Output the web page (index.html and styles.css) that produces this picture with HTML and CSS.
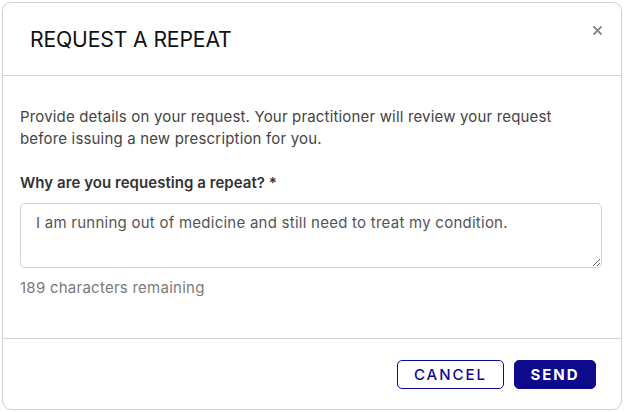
FILE: index.html
```html
<!DOCTYPE html>
<html>
<head>
<meta charset="utf-8">
<link rel="stylesheet" href="styles.css">
</head>
<body>
<div class="modal">
  <div class="modal-header">
    <h1 class="title">REQUEST A REPEAT</h1>
    <button class="close" aria-label="Close">
      <svg width="9" height="9" viewBox="0 0 9 9"><path d="M1 1L8 8M8 1L1 8" stroke="#8a8a8a" stroke-width="1.8" stroke-linecap="round"/></svg>
    </button>
  </div>
  <div class="modal-body">
    <p class="intro">Provide details on your request. Your practitioner will review your request before issuing a new prescription for you.</p>
    <label class="label">Why are you requesting a repeat? *</label>
    <textarea class="reason">I am running out of medicine and still need to treat my condition.</textarea>
    <div class="remaining">189 characters remaining</div>
  </div>
  <div class="modal-footer">
    <button class="btn btn-outline">CANCEL</button>
    <button class="btn btn-solid">SEND</button>
  </div>
</div>
</body>
</html>
```
FILE: styles.css
```css
html, body {
  margin: 0;
  padding: 0;
  background: #ffffff;
}
body {
  padding: 2px;
  font-family: Inter, "Liberation Sans", sans-serif;
}
.modal {
  width: 620px;
  height: 408px;
  border: 1px solid #cfcfcf;
  border-radius: 9px;
  box-sizing: border-box;
  display: flex;
  flex-direction: column;
  background: #fff;
}
.modal-header {
  height: 73px;
  border-bottom: 1px solid #d4d4d4;
  display: flex;
  align-items: flex-start;
  justify-content: space-between;
  box-sizing: border-box;
  padding: 0 19px 0 27px;
}
.title {
  margin: 23px 0 0 0;
  font-size: 21.2px;
  font-weight: 400;
  color: #111;
  letter-spacing: -0.15px;
  line-height: 26px;
}
.close {
  border: none;
  background: none;
  padding: 0;
  margin-top: 23px;
  width: 9px;
  height: 9px;
  display: flex;
}
.modal-body {
  padding: 30px 19px 0 17px;
  height: 263px;
  box-sizing: border-box;
  border-bottom: 1px solid #d4d4d4;
}
.intro {
  margin: 0;
  font-size: 15px;
  line-height: 22px;
  color: #444;
  letter-spacing: 0.17px;
}
.label {
  display: block;
  margin-top: 22px;
  font-size: 15px;
  font-weight: 600;
  color: #333;
  letter-spacing: 0.05px;
  line-height: 22px;
}
.reason {
  display: block;
  margin-top: 9px;
  width: 582px;
  height: 65px;
  box-sizing: border-box;
  border: 1px solid #d2d2d2;
  border-radius: 5px;
  padding: 9px 15px;
  font-family: Inter, "Liberation Sans", sans-serif;
  font-size: 15px;
  letter-spacing: 0.25px;
  line-height: 20px;
  color: #555;
  resize: vertical;
  outline: none;
}
.remaining {
  margin-top: 9px;
  font-size: 15px;
  letter-spacing: 0.25px;
  color: #7a7a7a;
  line-height: 22px;
}
.modal-footer {
  flex: 1;
  display: flex;
  justify-content: flex-end;
  align-items: flex-start;
  gap: 10px;
  padding: 21px 25px 0 0;
}
.btn {
  height: 29px;
  box-sizing: border-box;
  border-radius: 5px;
  font-family: Inter, "Liberation Sans", sans-serif;
  font-size: 15px;
  font-weight: 600;
  letter-spacing: 2px;
  cursor: pointer;
  padding: 0;
}
.btn-outline {
  width: 107px;
  border: 1px solid #0e0a8c;
  background: #fff;
  color: #0e0a8c;
  font-weight: 500;
}
.btn-solid {
  width: 82px;
  border: 1px solid #0e0a8c;
  background: #0e0a8c;
  color: #fff;
  font-weight: 700;
}
```
